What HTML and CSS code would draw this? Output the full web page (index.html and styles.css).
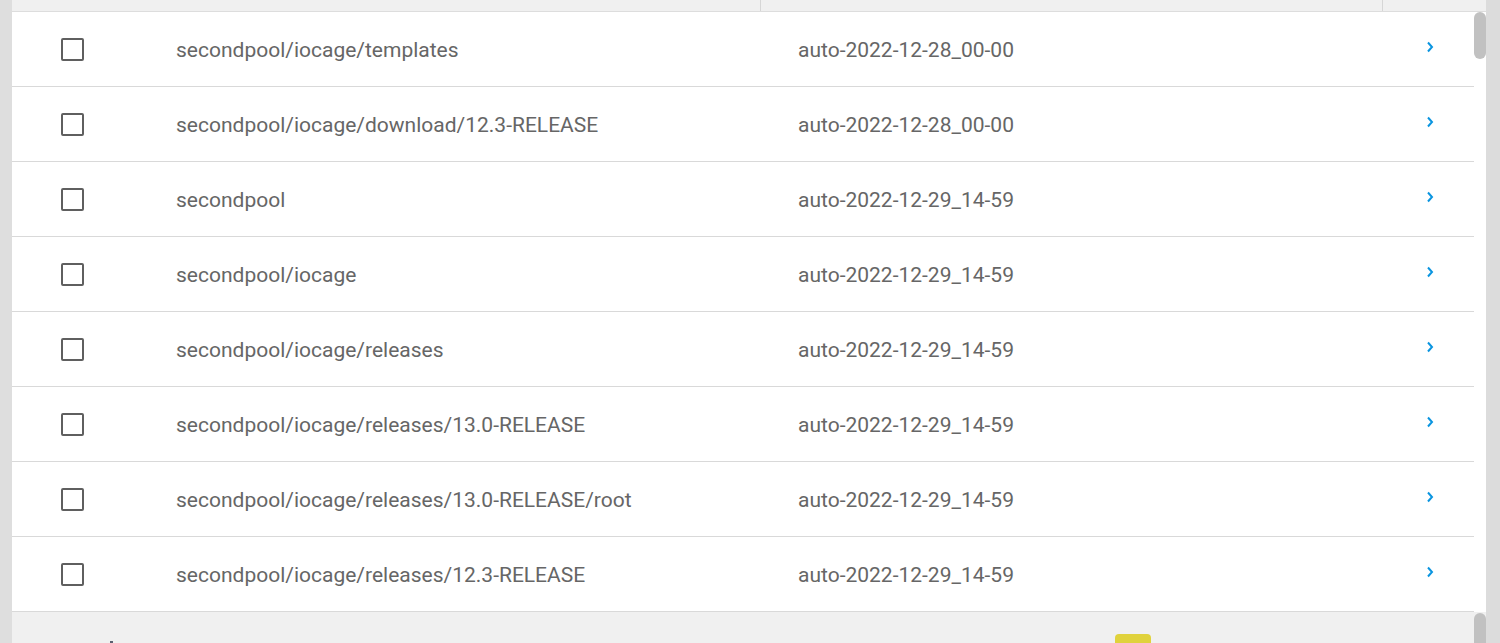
FILE: index.html
```html
<!DOCTYPE html>
<html>
<head>
<meta charset="utf-8">
<link rel="stylesheet" href="styles.css">
</head>
<body>
<div class="page">
  <div class="side-left"></div>
  <div class="panel">
    <div class="table-area">
      <div class="head">
        <div class="hcell"></div>
        <div class="hcell"></div>
        <div class="hcell last"></div>
      </div>
      <div class="body-wrap">
        <div class="rows">
          <div class="row"><div class="c1"><span class="cb"></span><span class="txt">secondpool/iocage/templates</span></div><div class="c2">auto-2022-12-28_00-00</div><div class="c3"><svg class="chev" width="8" height="12" viewBox="0 0 8 12"><path d="M2 1.5 L6 6 L2 10.5" fill="none" stroke="#0a95e0" stroke-width="2"/></svg></div></div>
          <div class="row"><div class="c1"><span class="cb"></span><span class="txt">secondpool/iocage/download/12.3-RELEASE</span></div><div class="c2">auto-2022-12-28_00-00</div><div class="c3"><svg class="chev" width="8" height="12" viewBox="0 0 8 12"><path d="M2 1.5 L6 6 L2 10.5" fill="none" stroke="#0a95e0" stroke-width="2"/></svg></div></div>
          <div class="row"><div class="c1"><span class="cb"></span><span class="txt">secondpool</span></div><div class="c2">auto-2022-12-29_14-59</div><div class="c3"><svg class="chev" width="8" height="12" viewBox="0 0 8 12"><path d="M2 1.5 L6 6 L2 10.5" fill="none" stroke="#0a95e0" stroke-width="2"/></svg></div></div>
          <div class="row"><div class="c1"><span class="cb"></span><span class="txt">secondpool/iocage</span></div><div class="c2">auto-2022-12-29_14-59</div><div class="c3"><svg class="chev" width="8" height="12" viewBox="0 0 8 12"><path d="M2 1.5 L6 6 L2 10.5" fill="none" stroke="#0a95e0" stroke-width="2"/></svg></div></div>
          <div class="row"><div class="c1"><span class="cb"></span><span class="txt">secondpool/iocage/releases</span></div><div class="c2">auto-2022-12-29_14-59</div><div class="c3"><svg class="chev" width="8" height="12" viewBox="0 0 8 12"><path d="M2 1.5 L6 6 L2 10.5" fill="none" stroke="#0a95e0" stroke-width="2"/></svg></div></div>
          <div class="row"><div class="c1"><span class="cb"></span><span class="txt">secondpool/iocage/releases/13.0-RELEASE</span></div><div class="c2">auto-2022-12-29_14-59</div><div class="c3"><svg class="chev" width="8" height="12" viewBox="0 0 8 12"><path d="M2 1.5 L6 6 L2 10.5" fill="none" stroke="#0a95e0" stroke-width="2"/></svg></div></div>
          <div class="row"><div class="c1"><span class="cb"></span><span class="txt">secondpool/iocage/releases/13.0-RELEASE/root</span></div><div class="c2">auto-2022-12-29_14-59</div><div class="c3"><svg class="chev" width="8" height="12" viewBox="0 0 8 12"><path d="M2 1.5 L6 6 L2 10.5" fill="none" stroke="#0a95e0" stroke-width="2"/></svg></div></div>
          <div class="row"><div class="c1"><span class="cb"></span><span class="txt">secondpool/iocage/releases/12.3-RELEASE</span></div><div class="c2">auto-2022-12-29_14-59</div><div class="c3"><svg class="chev" width="8" height="12" viewBox="0 0 8 12"><path d="M2 1.5 L6 6 L2 10.5" fill="none" stroke="#0a95e0" stroke-width="2"/></svg></div></div>
        </div>
        <div class="vscroll"><div class="thumb"></div></div>
      </div>
    </div>
    <div class="footer">
      <div class="footer-main">
        <span class="mark"></span>
        <span class="yellow-btn"></span>
      </div>
      <div class="vscroll2"><div class="thumb2"></div></div>
    </div>
  </div>
  <div class="side-right"></div>
</div>
</body>
</html>
```

FILE: styles.css
```css
html, body {
  margin: 0;
  padding: 0;
  width: 1500px;
  height: 643px;
  overflow: hidden;
  font-family: Roboto, "Liberation Sans", sans-serif;
}
.page {
  display: flex;
  height: 643px;
  background: #dcdcdc;
}
.side-left { width: 12px; background: #dedede; }
.side-right { width: 14px; background: #dcdcdc; }
.panel {
  width: 1474px;
  display: flex;
  flex-direction: column;
  background: #fff;
}
.head {
  display: grid;
  grid-template-columns: 749px 622px 1fr;
  height: 11px;
  background: #f0f0f0;
  border-bottom: 1px solid #dddddd;
}
.hcell { border-right: 1px solid #d6d6d6; }
.hcell.last { border-right: none; }
.body-wrap {
  display: flex;
}
.rows { width: 1462px; }
.row {
  display: grid;
  grid-template-columns: 749px 622px 1fr;
  height: 74px;
  border-bottom: 1px solid #d9d9d9;
  color: #666666;
  font-size: 21px;
}
.c1 {
  display: flex;
  align-items: center;
  padding-left: 49px;
}
.cb {
  width: 19px;
  height: 19px;
  border: 2px solid #5f5f5f;
  border-radius: 2px;
  flex: none;
}
.txt { margin-left: 92px; padding-top: 2px; }
.c2 {
  display: flex;
  align-items: center;
  padding-left: 37px;
  padding-top: 2px;
}
.c3 {
  padding-left: 43px;
  padding-top: 29px;
}
.chev { display: block; }
.vscroll {
  width: 12px;
  background: #fff;
}
.thumb {
  width: 12px;
  height: 47px;
  border-radius: 6px;
  background: #c1c1c1;
}
.footer {
  display: flex;
  flex: 1;
  background: #f0f0f0;
}
.footer-main {
  width: 1462px;
  position: relative;
}
.mark {
  position: absolute;
  left: 98px;
  top: 29px;
  width: 3px;
  height: 3px;
  background: #5a6070;
}
.yellow-btn {
  position: absolute;
  left: 1103px;
  top: 22px;
  width: 36px;
  height: 20px;
  border-radius: 4px;
  background: #e0d23c;
}
.vscroll2 {
  width: 12px;
  padding-top: 1px;
}
.thumb2 {
  width: 12px;
  height: 40px;
  border-radius: 6px 6px 0 0;
  background: #c1c1c1;
}
```
